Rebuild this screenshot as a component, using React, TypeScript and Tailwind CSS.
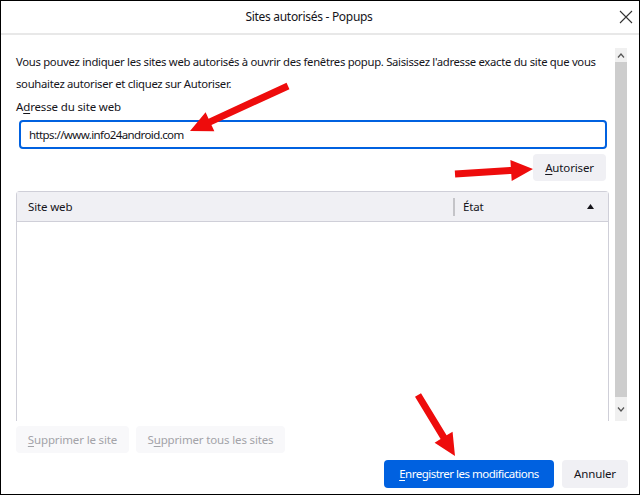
import React from 'react';

const font = { fontFamily: '"Segoe UI", "Noto Sans", sans-serif' };

function arrowPoints(tx: number, ty: number, hx: number, hy: number) {
  const dx = hx - tx;
  const dy = hy - ty;
  const len = Math.hypot(dx, dy);
  const ux = dx / len;
  const uy = dy / len;
  const px = -uy;
  const py = ux;
  const shaft = 3.5;
  const head = 10.5;
  const headLen = 22;
  const bx = hx - ux * headLen;
  const by = hy - uy * headLen;
  const pts = [
    [tx + px * shaft, ty + py * shaft],
    [bx + px * shaft, by + py * shaft],
    [bx + px * head, by + py * head],
    [hx, hy],
    [bx - px * head, by - py * head],
    [bx - px * shaft, by - py * shaft],
    [tx - px * shaft, ty - py * shaft],
  ];
  return pts.map((p) => p.join(',')).join(' ');
}

function U({ children }: { children: React.ReactNode }) {
  return <span className="underline underline-offset-2">{children}</span>;
}

export default function App() {
  return (
    <div
      className="relative flex h-[495px] w-[640px] flex-col overflow-hidden border border-black bg-white text-[11.5px] tracking-[-0.15px] text-[#15141a]"
      style={font}
    >
      {/* title bar */}
      <div className="relative flex h-[34px] shrink-0 items-center justify-center border-b-2 border-[#e8e8e8] pr-[22px] text-[12px] tracking-[-0.3px]">
        Sites autorisés - Popups
        <svg className="absolute right-[6px] top-[9px]" width="14" height="14" viewBox="0 0 14 14">
          <path d="M1 1 L13 13 M13 1 L1 13" stroke="#333" strokeWidth="1.1" fill="none" />
        </svg>
      </div>

      {/* scrolling content */}
      <div className="flex h-[386px] shrink-0">
        <div className="flex w-[608px] flex-col pl-[15px]">
          <p className="mt-[16px] text-[11.3px] leading-[22px] tracking-[-0.3px]">
            Vous pouvez indiquer les sites web autorisés à ouvrir des fenêtres popup. Saisissez l'adresse exacte du site que vous souhaitez autoriser et cliquez sur Autoriser.
          </p>
          <div className="mt-[3px] leading-[18px]">
            A<U>d</U>resse du site web
          </div>
          <div className="ml-[3px] mr-[2px] mt-[4px] flex h-[29px] items-center rounded-[4px] border-2 border-[#0061e0] px-[8px] tracking-[-0.6px]">
            https://www.info24android.com
          </div>
          <div className="mr-[3px] mt-[5px] flex justify-end">
            <div className="flex h-[27px] w-[73px] items-center justify-center rounded-[4px] bg-[#f0f0f4]">
              <U>A</U>utoriser
            </div>
          </div>
          <div className="mt-[10px] flex flex-1 flex-col rounded-t-[4px] border border-b-0 border-[#cfcfd8]">
            <div className="flex h-[30px] items-center border-b border-[#cfcfd8] bg-[#f0f0f4]">
              <div className="flex-1 pl-[11px]">Site web</div>
              <div className="h-[18px] w-[2px] bg-[#c4c4c8]" />
              <div className="flex w-[153px] items-center justify-between pl-[8px] pr-[14px]">
                <span>État</span>
                <svg width="7" height="5" viewBox="0 0 7 5">
                  <path d="M0 5 L3.5 0 L7 5 Z" fill="#15141a" />
                </svg>
              </div>
            </div>
            <div className="flex-1 bg-white" />
          </div>
        </div>
        <div className="ml-[6px] mt-[13px] flex w-[12px] flex-col bg-[#f0f0f0]">
          <div className="flex h-[14px] items-center justify-center">
            <svg width="8" height="5" viewBox="0 0 8 5">
              <path d="M1 4.5 L4 1 L7 4.5" stroke="#555" strokeWidth="1.2" fill="none" />
            </svg>
          </div>
          <div className="flex-1 bg-[#cdcdcd]" />
          <div className="flex h-[24px] items-center justify-center">
            <svg width="8" height="5" viewBox="0 0 8 5">
              <path d="M1 0.5 L4 4 L7 0.5" stroke="#555" strokeWidth="1.2" fill="none" />
            </svg>
          </div>
        </div>
      </div>

      {/* bottom buttons */}
      <div className="flex flex-col px-[15px]">
        <div className="mt-[5px] flex gap-[7px] text-[#a3a3a8]">
          <div className="flex h-[27px] w-[113px] items-center justify-center rounded-[4px] bg-[#f8f8fa]">
            <U>S</U>upprimer le site
          </div>
          <div className="flex h-[27px] w-[149px] items-center justify-center rounded-[4px] bg-[#f8f8fa]">
            S<U>u</U>pprimer tous les sites
          </div>
        </div>
        <div className="mr-[-4px] mt-[7px] flex justify-end gap-[8px]">
          <div className="flex h-[28px] w-[170px] items-center justify-center rounded-[4px] bg-[#0061e0] tracking-[-0.5px] text-white">
            <U>E</U>nregistrer les modifications
          </div>
          <div className="flex h-[28px] w-[66px] items-center justify-center rounded-[4px] bg-[#f0f0f4]">
            Annuler
          </div>
        </div>
      </div>

      {/* red annotation arrows */}
      <svg className="pointer-events-none absolute left-[-1px] top-[-1px]" width="640" height="495" viewBox="0 0 640 495">
        <polygon points={arrowPoints(288, 86, 190, 131)} fill="#ee0c0c" />
        <polygon points={arrowPoints(455, 174, 533, 169)} fill="#ee0c0c" />
        <polygon points={arrowPoints(418, 395, 455, 456)} fill="#ee0c0c" />
      </svg>
    </div>
  );
}
